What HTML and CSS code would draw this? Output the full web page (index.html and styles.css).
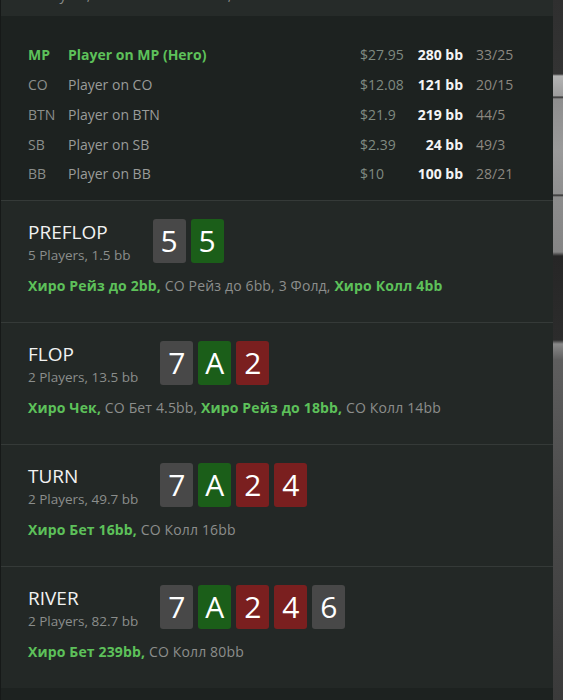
FILE: index.html
```html
<!DOCTYPE html>
<html lang="ru">
<head>
<meta charset="utf-8">
<title>Hand</title>
<link rel="stylesheet" href="styles.css">
</head>
<body>
<div class="panel">
  <div class="header">5 Players, 1/2/2023 4:56:09 PM, PT Poker</div>
  <div class="players">
    <div class="row hero"><span class="pos">MP</span><span class="name">Player on MP (Hero)</span><span class="money">$27.95</span><span class="bb">280 bb</span><span class="stats">33/25</span></div>
    <div class="row"><span class="pos">CO</span><span class="name">Player on CO</span><span class="money">$12.08</span><span class="bb">121 bb</span><span class="stats">20/15</span></div>
    <div class="row"><span class="pos">BTN</span><span class="name">Player on BTN</span><span class="money">$21.9</span><span class="bb">219 bb</span><span class="stats">44/5</span></div>
    <div class="row"><span class="pos">SB</span><span class="name">Player on SB</span><span class="money">$2.39</span><span class="bb">24 bb</span><span class="stats">49/3</span></div>
    <div class="row"><span class="pos">BB</span><span class="name">Player on BB</span><span class="money">$10</span><span class="bb">100 bb</span><span class="stats">28/21</span></div>
  </div>

  <div class="street">
    <div class="street-head">
      <div class="street-info">
        <div class="street-title">PREFLOP</div>
        <div class="street-sub">5 Players, 1.5 bb</div>
      </div>
      <div class="cards">
        <span class="card grey">5</span><span class="card green">5</span>
      </div>
    </div>
    <div class="actions"><span class="h">Хиро Рейз до 2bb,</span> CO Рейз до 6bb, 3 Фолд, <span class="h">Хиро Колл 4bb</span></div>
  </div>

  <div class="street">
    <div class="street-head">
      <div class="street-info">
        <div class="street-title">FLOP</div>
        <div class="street-sub">2 Players, 13.5 bb</div>
      </div>
      <div class="cards">
        <span class="card grey">7</span><span class="card green">A</span><span class="card red">2</span>
      </div>
    </div>
    <div class="actions"><span class="h">Хиро Чек,</span> CO Бет 4.5bb, <span class="h">Хиро Рейз до 18bb,</span> CO Колл 14bb</div>
  </div>

  <div class="street">
    <div class="street-head">
      <div class="street-info">
        <div class="street-title">TURN</div>
        <div class="street-sub">2 Players, 49.7 bb</div>
      </div>
      <div class="cards">
        <span class="card grey">7</span><span class="card green">A</span><span class="card red">2</span><span class="card red">4</span>
      </div>
    </div>
    <div class="actions"><span class="h">Хиро Бет 16bb,</span> CO Колл 16bb</div>
  </div>

  <div class="street">
    <div class="street-head">
      <div class="street-info">
        <div class="street-title">RIVER</div>
        <div class="street-sub">2 Players, 82.7 bb</div>
      </div>
      <div class="cards">
        <span class="card grey">7</span><span class="card green">A</span><span class="card red">2</span><span class="card red">4</span><span class="card grey">6</span>
      </div>
    </div>
    <div class="actions"><span class="h">Хиро Бет 239bb,</span> CO Колл 80bb</div>
  </div>
  <div class="tail"></div>
</div>
</body>
</html>
```

FILE: styles.css
```css
html, body {
  margin: 0;
  padding: 0;
}
body {
  height: 700px;
  overflow: hidden;
  font-family: "Open Sans", "Noto Sans", sans-serif;
  background:
    linear-gradient(to bottom,
      #2f2f2f 0, #333 74px,
      #b4b4b4 76px, #9c9c9c 96px, #2a2a2a 97px, #8e8e8e 99px, #9a9a9a 150px,
      #8f8f8f 194px, #2a2a2a 195px, #8c8c8c 197px, #858585 252px,
      #262626 256px, #2c2c2c 340px, #8a8a8a 344px, #5e5e5e 360px,
      #4c4c4c 500px, #3a3a3a 700px);
}
.panel {
  width: 552px;
  margin-top: -15px;
  border-left: 1px solid #161918;
  background: #1d2220;
}
.header {
  background: #262b29;
  color: #8a8d8b;
  font-size: 14px;
  line-height: 20px;
  padding: 0 0 11px 27px;
}
.players {
  display: grid;
  grid-template-columns: 40px 292px 50px 53px auto;
  grid-auto-rows: 29.75px;
  align-items: center;
  padding: 24px 0 11px 27px;
  background: #1d2220;
  font-size: 14px;
  color: #8a8d8b;
}
.row {
  display: contents;
}
.pos { color: #8b8e8c; }
.name { color: #9a9c9a; }
.money { color: #7f8a80; }
.bb {
  color: #f4f4f4;
  font-weight: 700;
  text-align: right;
}
.stats {
  color: #8c8880;
  padding-left: 13px;
}
.hero .pos, .hero .name {
  color: #5dc15a;
  font-weight: 700;
}
.street {
  background: #232826;
  border-top: 1px solid #353a38;
  padding: 18px 0 26px 27px;
  height: 77px;
}
.street-head {
  display: flex;
  align-items: flex-start;
  gap: 22px;
  height: 46px;
}
.street-title {
  color: #f2f2f2;
  font-size: 19px;
  line-height: 26px;
}
.street-sub {
  color: #8b8e8c;
  font-size: 13.5px;
  line-height: 21px;
}
.cards {
  display: flex;
  gap: 5px;
}
.card {
  width: 33px;
  height: 44px;
  border-radius: 3px;
  color: #fff;
  font-size: 30px;
  line-height: 44px;
  text-align: center;
}
.card.grey { background: #484848; }
.card.green { background: #1b5e19; }
.card.red { background: #7a1f1f; }
.actions {
  margin-top: 11px;
  color: #8c8e8c;
  font-size: 14px;
  line-height: 20px;
  letter-spacing: 0.15px;
  white-space: nowrap;
}
.actions .h {
  color: #5dc15a;
  font-weight: 700;
}
.tail {
  height: 40px;
  background: #1d2220;
}
```
